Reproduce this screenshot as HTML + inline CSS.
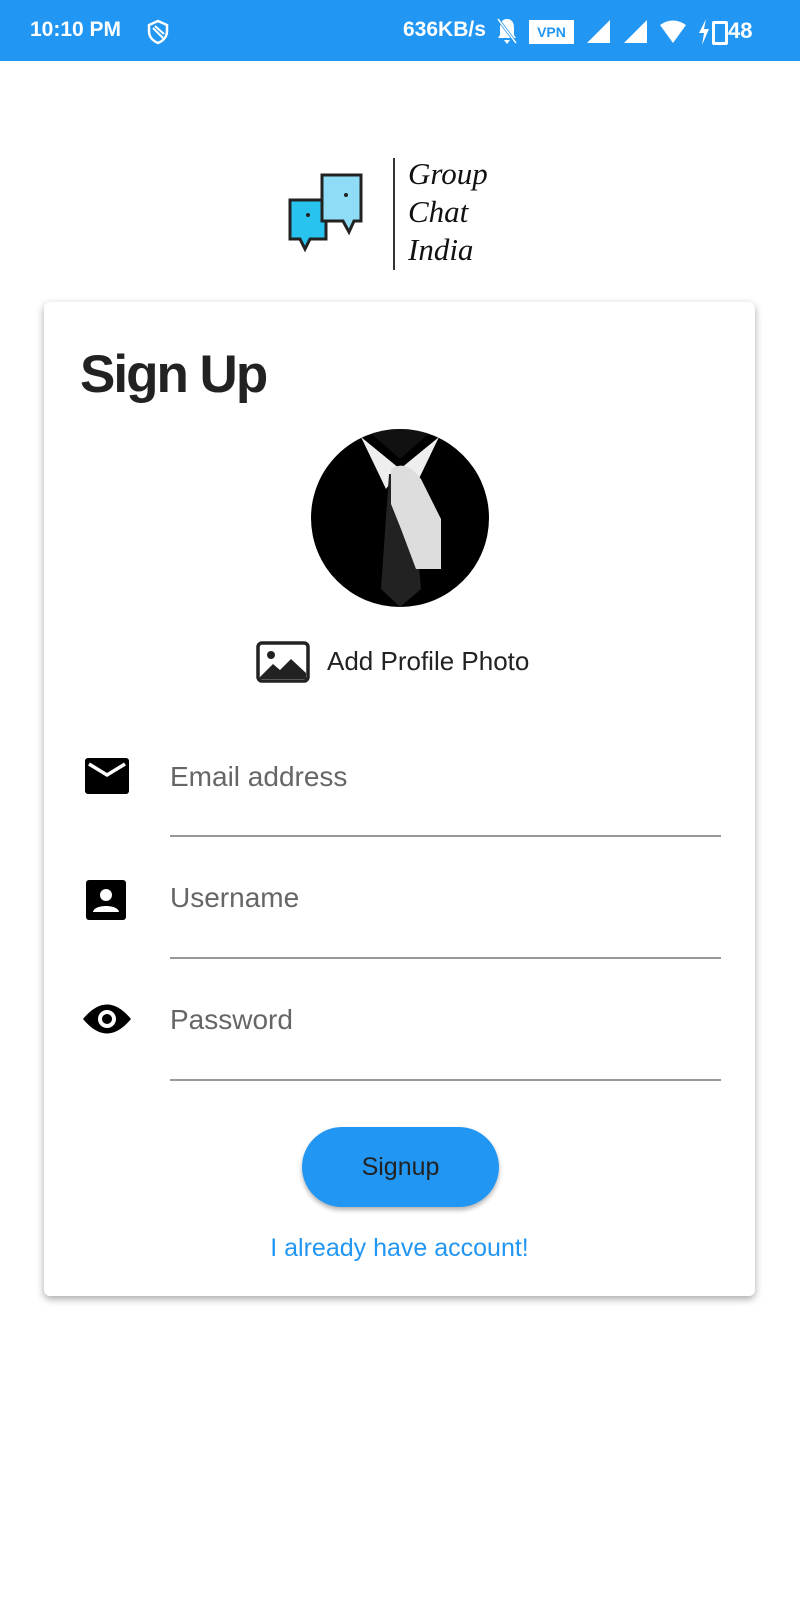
<!DOCTYPE html>
<html><head><meta charset="utf-8"><style>
*{margin:0;padding:0;box-sizing:border-box}
body{width:800px;height:1600px;background:#fff;font-family:"Liberation Sans",sans-serif;position:relative;overflow:hidden}
.sb{position:absolute;left:0;top:0;width:800px;height:61px;background:#2196f3;color:#fff;font-weight:bold;font-size:21px}
.a{position:absolute}
.card{position:absolute;left:44px;top:302px;width:711px;height:994px;background:#fff;border-radius:6px;box-shadow:0 3px 8px rgba(0,0,0,.35)}
.ph{position:absolute;left:170px;font-size:28px;color:#666}
.ul{position:absolute;left:170px;width:551px;height:2px;background:#999}
</style></head><body>
<div class="sb">
<div class="a" style="left:30px;top:18px">10:10 PM</div>
<svg class="a" style="left:146px;top:19px" width="24" height="26" viewBox="0 0 24 26"><path d="M12 2 L21 6 V12 C21 18 17 22 12 24 C7 22 3 18 3 12 V6Z" fill="none" stroke="#fff" stroke-width="2.5"/><path d="M7 9 L17 19 M9 7 L18 15" stroke="#fff" stroke-width="2"/></svg>
<div class="a" style="left:403px;top:18px">636KB/s</div>
<svg class="a" style="left:495px;top:16px" width="24" height="30" viewBox="0 0 24 30"><path d="M12 3 C7 3 5 7 5 12 V19 L3 22 H21 L19 19 V12 C19 7 17 3 12 3Z M9 24 H15 L12 28Z" fill="#fff"/><path d="M3 3 L21 27" stroke="#2196f3" stroke-width="3"/><path d="M3 3 L21 27" stroke="#fff" stroke-width="1.5"/></svg>
<div class="a" style="left:529px;top:20px;width:45px;height:24px;background:#fff;color:#2196f3;font-size:14px;text-align:center;line-height:24px">VPN</div>
<svg class="a" style="left:586px;top:18px" width="26" height="26"><path d="M24 2 V25 H1Z" fill="#fff"/></svg>
<svg class="a" style="left:623px;top:18px" width="26" height="26"><path d="M24 2 V25 H1Z" fill="#fff"/></svg>
<svg class="a" style="left:659px;top:20px" width="28" height="24"><path d="M1 5 Q14 -4 27 5 L14 23Z" fill="#fff"/></svg>
<svg class="a" style="left:697px;top:18px" width="14" height="28"><path d="M9 1 L2 15 H7 L5 27 L12 11 H7Z" fill="#fff"/></svg>
<div class="a" style="left:712px;top:21px;width:16px;height:24px;border:3px solid #fff;border-radius:2px"></div>
<div class="a" style="left:728px;top:18px;font-size:22px">48</div>
</div>
<svg class="a" style="left:288px;top:155px" width="100" height="100" viewBox="0 0 100 100">
<path d="M2 45 H38 V84 H22 L17 94 L12 84 H2Z" fill="#29c3f0" stroke="#222" stroke-width="3"/>
<path d="M34 20 H73 V66 H66 L61 77 L55 66 H34Z" fill="#8fdcf7" stroke="#222" stroke-width="3"/>
<circle cx="58" cy="40" r="2" fill="#222"/><circle cx="20" cy="60" r="2" fill="#222"/>
</svg>
<div class="a" style="left:393px;top:158px;width:2px;height:112px;background:#333"></div>
<div class="a" style="left:408px;top:155px;font-family:'Liberation Serif',serif;font-style:italic;font-size:31px;line-height:38px;color:#111">Group<br>Chat<br>India</div>
<div class="card">
<div class="a" style="left:36px;top:42px;font-size:53px;font-weight:bold;color:#222;letter-spacing:-2px">Sign Up</div>
<svg class="a" style="left:267px;top:127px" width="178" height="178" viewBox="0 0 178 178">
<defs><clipPath id="c"><circle cx="89" cy="89" r="89"/></clipPath></defs>
<circle cx="89" cy="89" r="89" fill="#000"/>
<g clip-path="url(#c)">
<path d="M55 0 L89 30 L123 0 L115 -5 H63Z" fill="#111"/>
<path d="M50 8 L75 60 L89 40Z M128 8 L103 60 L89 40Z" fill="#eee"/>
<path d="M78 45 L100 45 L110 160 L89 178 L70 160Z" fill="#222"/>
<path d="M80 40 Q95 30 110 50 L130 90 L130 140 L105 140 L90 100 L80 75Z" fill="#ddd"/>
</g></svg>
<svg class="a" style="left:212px;top:339px" width="54" height="42" viewBox="0 0 54 42"><rect x="2" y="2" width="50" height="38" rx="4" fill="none" stroke="#222" stroke-width="3.5"/><circle cx="15" cy="14" r="4" fill="#222"/><path d="M4 36 L17 23 L24 29 L35 18 L50 32 V38 H4Z" fill="#222"/></svg>
<div class="a" style="left:283px;top:344px;font-size:26px;color:#222">Add Profile Photo</div>
<svg class="a" style="left:41px;top:456px" width="44" height="36" viewBox="0 0 44 36"><rect width="44" height="36" rx="3" fill="#000"/><path d="M4 6 L22 17 L40 6" fill="none" stroke="#fff" stroke-width="3.5"/></svg>
<div class="ph" style="left:126px;top:459px">Email address</div>
<div class="ul" style="left:126px;top:533px"></div>
<svg class="a" style="left:42px;top:578px" width="40" height="40" viewBox="0 0 40 40"><rect width="40" height="40" rx="3" fill="#000"/><circle cx="20" cy="15" r="6" fill="#fff"/><path d="M7 32 C8 24 32 24 33 32Z" fill="#fff"/></svg>
<div class="ph" style="left:126px;top:580px">Username</div>
<div class="ul" style="left:126px;top:655px"></div>
<svg class="a" style="left:38px;top:700px" width="50" height="34" viewBox="0 0 50 34"><path d="M1 17 Q25 -12 49 17 Q25 46 1 17Z" fill="#000"/><circle cx="25" cy="17" r="9" fill="#fff"/><circle cx="25" cy="17" r="5" fill="#000"/></svg>
<div class="ph" style="left:126px;top:702px">Password</div>
<div class="ul" style="left:126px;top:777px"></div>
<div class="a" style="left:258px;top:825px;width:197px;height:80px;border-radius:40px;background:#2196f3;box-shadow:0 3px 5px rgba(0,0,0,.3);color:#222;font-size:25px;text-align:center;line-height:80px">Signup</div>
<div class="a" style="left:0;width:711px;top:932px;text-align:center;font-size:25px;color:#2196f3">I already have account!</div>
</div>
</body></html>
